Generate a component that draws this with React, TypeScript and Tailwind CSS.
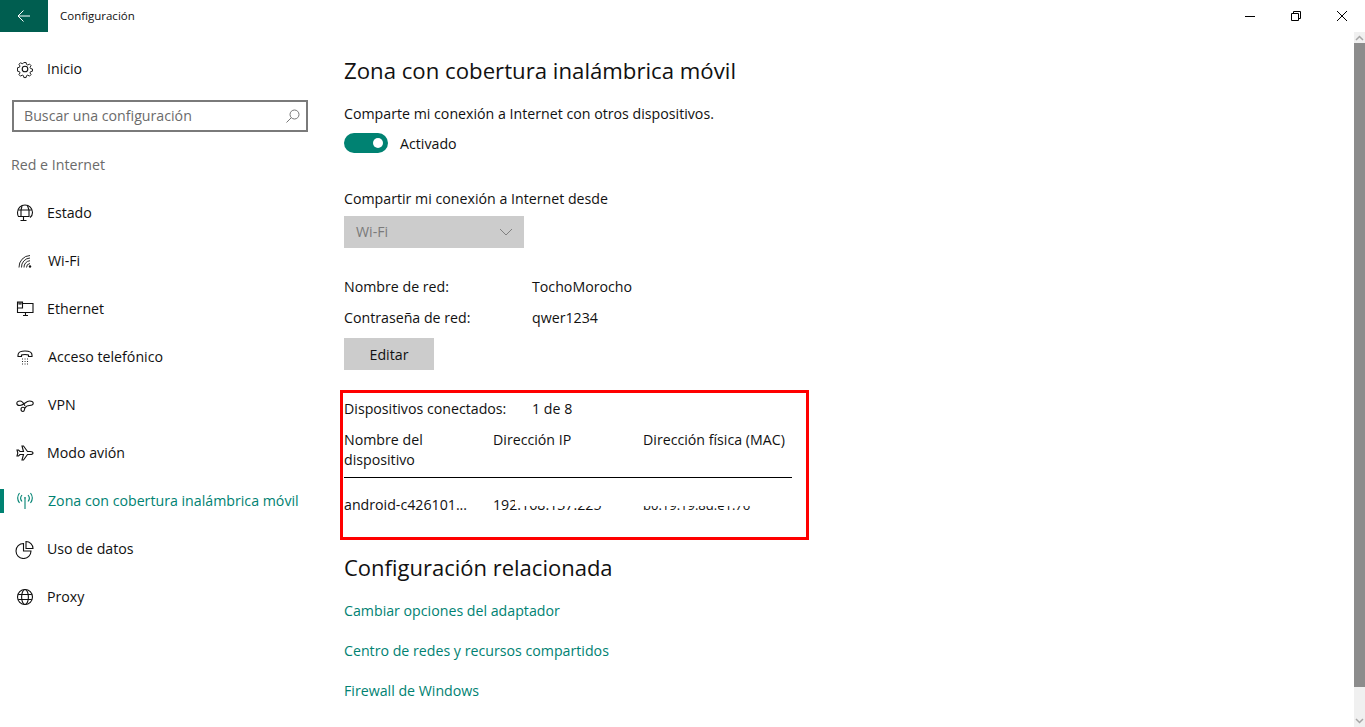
import { ReactNode } from "react";

const Svg = ({ children }: { children: ReactNode }) => (
  <svg width="20" height="20" viewBox="0 0 20 20" fill="none" stroke="currentColor" strokeWidth="1.100" className="shrink-0">
    {children}
  </svg>
);

const Gear = () => (
  <Svg>
    <circle cx="10" cy="10" r="2.800" />
    <path d="M8.700 2.500h2.600l.5 2.200 1.500.7 2-1.100 1.800 1.800-1.200 2 .7 1.500 2.200.5v2.600l-2.200.5-.7 1.500 1.200 2-1.800 1.800-2-1.200-1.500.7-.5 2.200H8.700l-.5-2.200-1.500-.7-2 1.200-1.800-1.800 1.200-2-.7-1.500-2.200-.5V8.600l2.200-.5.7-1.500-1.200-2 1.800-1.800 2 1.100 1.500-.7z" transform="translate(1.500 1.400) scale(.85)" />
  </Svg>
);
const Estado = () => (
  <Svg>
    <path d="M3.500 13.500C2.500 12.300 2.500 11 2.500 9.500a7.500 7.500 0 0 1 15 0c0 2.500-1 4-2.500 5" />
    <path d="M3 7h14M7 3l-1 4v6.500M12.500 2.800 14 7v6M3 13.500h11V7M8.500 13.500v4M5.500 17.500h6" />
  </Svg>
);
const Wifi = () => (
  <Svg>
    <circle cx="15" cy="15.500" r="1.200" fill="currentColor" stroke="none" />
    <path d="M11.500 16.500a4 4 0 0 1 3.500-4M9 16.500A6.500 6.500 0 0 1 15 9.700M6.500 16.500A9 9 0 0 1 15 7M4 16.500A11.500 11.500 0 0 1 15 4.500" strokeWidth=".9" />
  </Svg>
);
const Ethernet = () => (
  <Svg>
    <path d="M8 4.500h10v9H2.500V9" />
    <path d="M2.500 3h5v6h-5zM4 3v2h2V3M8 16.500h5M10.500 13.500v3" />
  </Svg>
);
const Phone = () => (
  <Svg>
    <path d="M3 9.500V8c0-2.500 3-4 7-4s7 1.500 7 4v1.500h-3.500V8c-1-.7-6-.7-7 0v1.500z" />
    <path d="M7 12h.9M9.600 12h.9M12.100 12h.9M7 14.500h.9M9.600 14.500h.9M12.100 14.500h.9M7 17h.9M9.600 17h.9M12.100 17h.9" />
  </Svg>
);
const Vpn = () => (
  <Svg>
    <path d="M5 6c-2 0-3.200 1-3.200 2.200S3 10.500 5 10.500c3.500 0 6-4.500 9.500-4.500 2 0 3.700 1 3.700 2.300s-1.700 2.200-3.700 2.200c-2.500 0-3.700 1-4.500 2.500-.8 1.500-.3 3.500-2 3.500-1.300 0-2-1-2-2.200 0-1 .7-2 2-2 1 0 1.700.7 1.700 1.500M5 6c3 0 4 3 5 5" />
  </Svg>
);
const Plane = () => (
  <Svg>
    <path d="M18 10c0-1-1.500-1.500-3-1.500h-2.500L8.500 3H7l1.500 5.500H5L3.500 7H2l.8 3-.8 3h1.500L5 11.500h3.500L7 17h1.500l4-5.500H15c1.500 0 3-.5 3-1.500z" />
  </Svg>
);
const Antenna = () => (
  <Svg>
    <path d="M10 8v10" />
    <circle cx="10" cy="7" r=".9" fill="currentColor" stroke="none" />
    <path d="M7 4a5 5 0 0 0 0 6.500M13 4a5 5 0 0 1 0 6.500M4.500 2a8.500 8.500 0 0 0 0 10M15.500 2a8.500 8.500 0 0 1 0 10" />
  </Svg>
);
const Pie = () => (
  <Svg>
    <path d="M8.500 4.500a7.500 7.500 0 1 0 7.500 7.500H8.500z" />
    <path d="M11 2.500a7 7 0 0 1 7 7h-7z" />
  </Svg>
);
const Globe = () => (
  <Svg>
    <circle cx="10" cy="10" r="7.500" />
    <ellipse cx="10" cy="10" rx="3.400" ry="7.500" />
    <path d="M3.200 7.500h13.600M3.200 12.500h13.600" />
  </Svg>
);

const nav: [string, () => ReactNode, boolean][] = [
  ["Estado", Estado, false],
  ["Wi-Fi", Wifi, true],
  ["Ethernet", Ethernet, false],
  ["Acceso telefónico", Phone, true],
  ["VPN", Vpn, true],
  ["Modo avión", Plane, false],
  ["Zona con cobertura inalámbrica móvil", Antenna, true],
  ["Uso de datos", Pie, false],
  ["Proxy", Globe, false],
];

export default function App() {
  return (
    <div
      className="relative h-[727px] w-[1365px] overflow-hidden bg-white text-[14.200px] leading-5 text-[#111111]"
      style={{ fontFamily: '"Open Sans", "Noto Sans", sans-serif' }}
    >
      <header className="flex h-8 items-center">
        <div className="flex h-8 w-12 items-center justify-center bg-[#005e50] text-white">
          <svg width="16" height="16" viewBox="0 0 16 16" fill="none" stroke="currentColor" strokeWidth="1">
            <path d="M14 8H2M7.500 2.500 2 8l5.500 5.500" />
          </svg>
        </div>
        <span className="ml-3 text-[11.500px]">Configuración</span>
        <div className="ml-auto flex h-8 items-center text-black">
          <div className="flex w-[46px] justify-center">
            <svg width="12" height="12" viewBox="-1 0 12 12" stroke="currentColor"><path d="M0 6.500h10" /></svg>
          </div>
          <div className="flex w-[46px] justify-center">
            <svg width="12" height="12" viewBox="-1 0 12 12" fill="none" stroke="currentColor"><path d="M.5 3.500h7v7h-7zM2.500 3.500v-2h7v7h-2" /></svg>
          </div>
          <div className="flex w-[46px] justify-center">
            <svg width="12" height="12" viewBox="-1 0 12 12" stroke="currentColor"><path d="M0 1l10 10M10 1 0 11" /></svg>
          </div>
        </div>
      </header>

      <div className="flex">
        <aside className="w-[344px] shrink-0">
          <div className="flex h-14 items-center gap-3 pl-[15px] pt-[17px]">
            <Gear />
            <span>Inicio</span>
          </div>
          <div className="ml-3 mr-9 mt-3 flex h-8 items-center justify-between border-2 border-[#7a7a7a] pl-[10px] pr-[5px] text-[#6b6b6b]">
            <span>Buscar una configuración</span>
            <svg width="16" height="16" viewBox="0 0 16 16" fill="none" stroke="#777" strokeWidth="1">
              <circle cx="9.500" cy="6.500" r="4.500" />
              <path d="M6.300 9.700 1.500 14.500" />
            </svg>
          </div>
          <div className="pl-[11px] pt-[23px] text-[#6b6b6b]">Red e Internet</div>
          <nav className="mt-[14px]">
            {nav.map(([label, Icon, wide]) => {
              const active = label.startsWith("Zona");
              return (
                <div
                  key={label}
                  className={`relative flex h-12 items-center pl-[15px] ${wide ? "gap-[13px]" : "gap-3"} ${active ? "text-[#008272]" : ""}`}
                >
                  {active && <span className="absolute left-0 top-[12px] h-6 w-1 bg-[#008272]" />}
                  <Icon />
                  <span>{label}</span>
                </div>
              );
            })}
          </nav>
        </aside>

        <main className="w-[500px]">
          <h1 className="mt-[20px] text-[22.200px] leading-[38px] font-normal">Zona con cobertura inalámbrica móvil</h1>
          <p className="mt-[14px]">Comparte mi conexión a Internet con otros dispositivos.</p>
          <div className="mt-[9px] flex h-5 items-center gap-3">
            <div className="flex h-5 w-11 items-center justify-end rounded-full bg-[#008272] pr-[5px]">
              <span className="h-[10px] w-[10px] rounded-full bg-white" />
            </div>
            <span className="pt-[2px]">Activado</span>
          </div>
          <p className="mt-[36px]">Compartir mi conexión a Internet desde</p>
          <div className="mt-[7px] flex h-8 w-[180px] items-center justify-between bg-[#cccccc] pl-3 pr-[11px] text-[#7a7a7a]">
            <span>Wi-Fi</span>
            <svg width="14" height="8" viewBox="0 0 14 8" fill="none" stroke="#808080"><path d="M1 1l6 6 6-6" /></svg>
          </div>
          <div className="mt-[29px] grid grid-cols-[188px_1fr] gap-y-[11px]">
            <span>Nombre de red:</span>
            <span>TochoMorocho</span>
            <span>Contraseña de red:</span>
            <span>qwer1234</span>
          </div>
          <div className="mt-[10px] flex h-8 w-[90px] items-center justify-center bg-[#cccccc] pt-[2px]">Editar</div>

          <section className="-ml-1 mt-[20px] h-[150px] w-[469px] border-[3px] border-[#ff0000] pl-[1px] pt-[6px]">
            <div className="grid grid-cols-[188px_1fr]">
              <span>Dispositivos conectados:</span>
              <span>1 de 8</span>
            </div>
            <div className="mt-[11px] grid w-[448px] grid-cols-[149px_150px_1fr] border-b border-black pb-[7px]">
              <span>
                Nombre del
                <br />
                dispositivo
              </span>
              <span>Dirección IP</span>
              <span className="whitespace-nowrap">Dirección física (MAC)</span>
            </div>
            <div className="relative mt-[17px] grid grid-cols-[149px_150px_1fr]">
              <span>android-c426101...</span>
              <span>192.168.137.225</span>
              <span className="text-[13px]">b0:19:19:8d:e1:76</span>
              <span className="absolute left-[171px] top-0 h-[11px] w-[100px] bg-white" />
              <span className="absolute left-[295px] top-0 h-[11px] w-[130px] bg-white" />
            </div>
          </section>

          <h2 className="mt-[8px] text-[22px] leading-[38px] font-normal">Configuración relacionada</h2>
          <div className="mt-[15px] flex flex-col gap-5 text-[#008272]">
            <span>Cambiar opciones del adaptador</span>
            <span>Centro de redes y recursos compartidos</span>
            <span>Firewall de Windows</span>
          </div>
        </main>

        <div className="ml-auto flex h-[695px] w-[11px] flex-col bg-[#f0f0f0]">
          <div className="flex h-[11px] items-center justify-center">
            <svg width="9" height="6" viewBox="0 0 9 6" fill="none" stroke="#a6a6a6" strokeWidth="1.500"><path d="M1 5l3.500-3.500L8 5" /></svg>
          </div>
          <div className="h-[644px] bg-[#8c8c8c]" />
          <div className="mt-auto flex h-[12px] items-center justify-center">
            <svg width="9" height="6" viewBox="0 0 9 6" fill="none" stroke="#a6a6a6" strokeWidth="1.500"><path d="M1 1l3.500 3.500L8 1" /></svg>
          </div>
        </div>
      </div>
    </div>
  );
}
